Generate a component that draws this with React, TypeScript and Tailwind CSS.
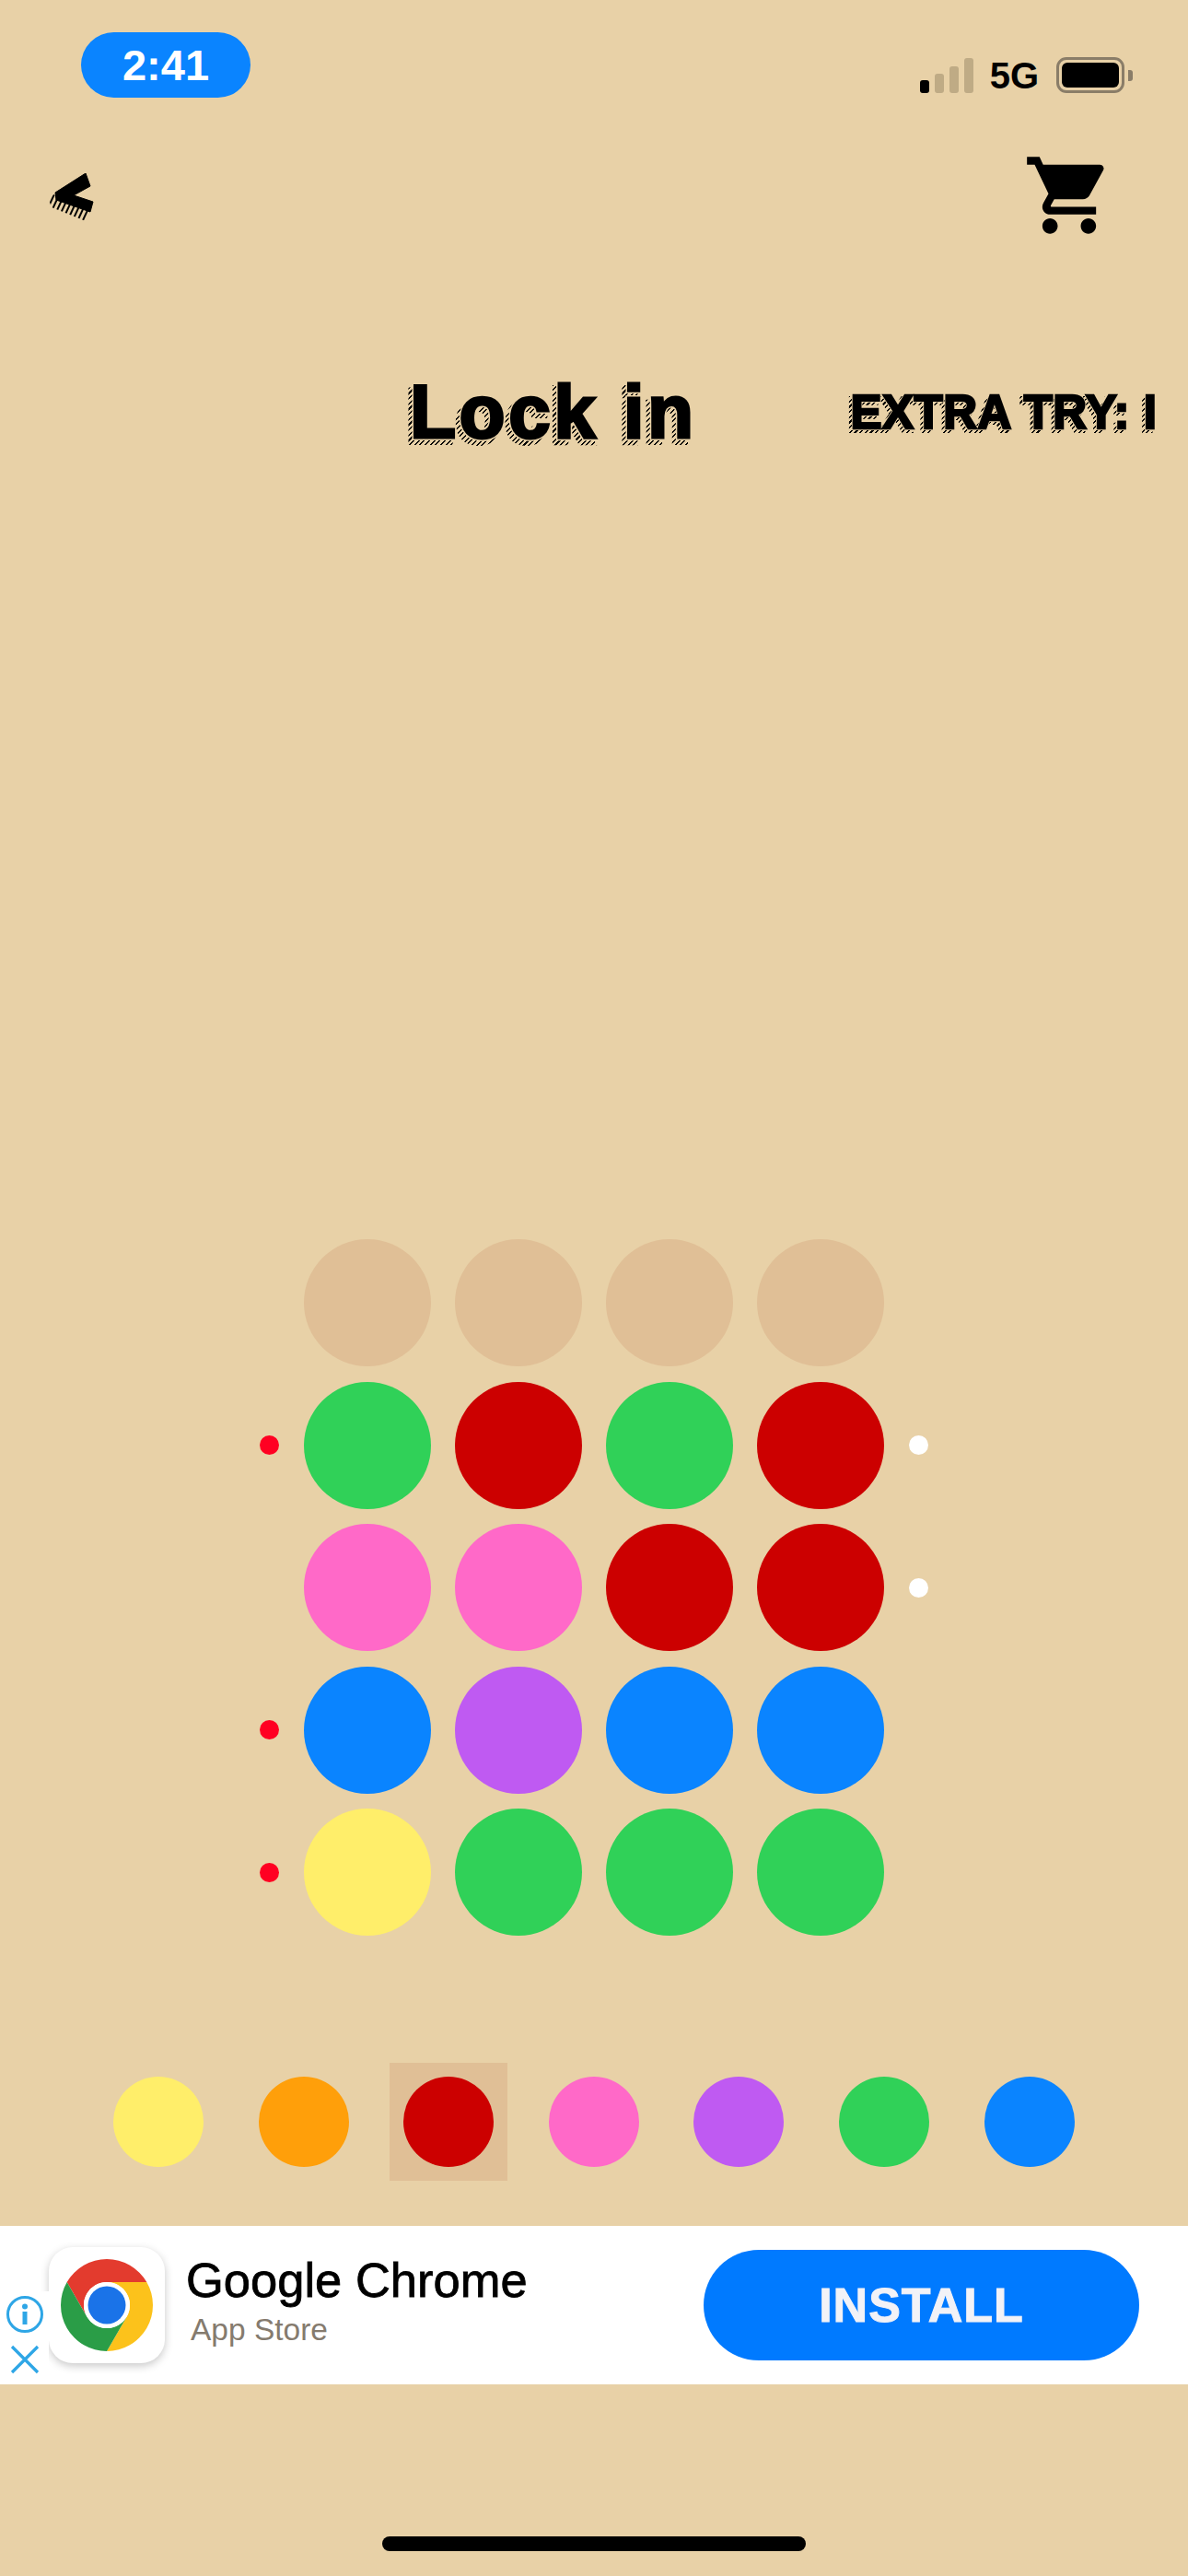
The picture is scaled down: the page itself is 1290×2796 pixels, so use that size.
import React from 'react';
import { MdShoppingCart } from 'react-icons/md';

const BG = 'bg-[#e8d1a7]';

// board rows: four pegs plus the left/right score dots
const rows = [
  { pegs: ['bg-[#e0bf96]', 'bg-[#e0bf96]', 'bg-[#e0bf96]', 'bg-[#e0bf96]'], red: false, white: false },
  { pegs: ['bg-[#30d158]', 'bg-[#cc0000]', 'bg-[#30d158]', 'bg-[#cc0000]'], red: true, white: true },
  { pegs: ['bg-[#ff69c8]', 'bg-[#ff69c8]', 'bg-[#cc0000]', 'bg-[#cc0000]'], red: false, white: true },
  { pegs: ['bg-[#0a84ff]', 'bg-[#bf5af2]', 'bg-[#0a84ff]', 'bg-[#0a84ff]'], red: true, white: false },
  { pegs: ['bg-[#ffee6a]', 'bg-[#30d158]', 'bg-[#30d158]', 'bg-[#30d158]'], red: true, white: false },
];

const palette = [
  'bg-[#ffee6a]',
  'bg-[#ff9f0a]',
  'bg-[#cc0000]',
  'bg-[#ff69c8]',
  'bg-[#bf5af2]',
  'bg-[#30d158]',
  'bg-[#0a84ff]',
];

// Heavy title text; the hatched drop shadow and its cream halo are pseudo elements behind the text
function ShadowText({ text, className }: { text: string; className: string }) {
  return (
    <span
      data-text={text}
      className={`relative isolate inline-block whitespace-nowrap font-bold text-black [font-family:'Liberation_Sans',Arial,sans-serif]
        before:absolute before:-z-10 before:content-[attr(data-text)] before:text-transparent before:bg-clip-text
        before:bg-[repeating-linear-gradient(135deg,#000_0px,#000_1.5px,transparent_1.5px,transparent_4px)]
        after:absolute after:left-0 after:top-0 after:-z-10 after:content-[attr(data-text)] after:text-[#e8d1a7]
        ${className}`}
    >
      {text}
    </span>
  );
}

function StatusBar() {
  return (
    <div className="h-[106px] flex justify-between items-start pl-[88px] pr-[60px] pt-[35px] [font-family:'Liberation_Sans',Arial,sans-serif]">
      <div className="w-[184px] h-[71px] rounded-full bg-[#0a84ff] text-white font-bold text-[47px] leading-[71px] text-center">
        2:41
      </div>
      <div className="flex items-end h-[66px] pb-0">
        <div className="flex items-end gap-[6px] mr-[18px]">
          <div className="w-[10px] h-[14px] rounded-[3px] bg-black" />
          <div className="w-[10px] h-[21px] rounded-[3px] bg-[#bfab85]" />
          <div className="w-[10px] h-[29px] rounded-[3px] bg-[#bfab85]" />
          <div className="w-[10px] h-[38px] rounded-[3px] bg-[#bfab85]" />
        </div>
        <div className="font-bold text-[40px] leading-[40px] text-black mr-[19px] mb-[-1px]">5G</div>
        <div className="flex items-center">
          <div className="w-[74px] h-[39px] rounded-[11px] border-[3px] border-[#8a7d68] p-[3px]">
            <div className="w-full h-full rounded-[6px] bg-black" />
          </div>
          <div className="w-[5px] h-[12px] ml-[4px] rounded-r-[3px] bg-[#8a7d68]" />
        </div>
      </div>
    </div>
  );
}

function BackChevron() {
  return (
    <svg width="52" height="54" viewBox="0 0 52 54" fill="none">
      <defs>
        <pattern id="hatch" width="5" height="5" patternUnits="userSpaceOnUse" patternTransform="rotate(25)">
          <rect width="2" height="5" fill="#000" />
        </pattern>
      </defs>
      <path d="M1 29 L6 23 L46 42 L41 52 L4 37 Z" fill="url(#hatch)" />
      <path
        d="M8 21 L41 0 L46 14 L28 24 L49 31 L46 42 L9 29 Z"
        fill="#000"
        stroke="#000"
        strokeWidth="1"
        strokeLinejoin="round"
      />
    </svg>
  );
}

function TopBar() {
  return (
    <div className="flex justify-between items-start pl-[52px] pr-[79px] mt-[56px]">
      <div className="mt-[26px]">
        <BackChevron />
      </div>
      <MdShoppingCart className="w-[100px] h-[100px] text-black" />
    </div>
  );
}

function Board() {
  return (
    <div className="flex flex-col gap-[16.5px] items-start ml-[282px]">
      {rows.map((row, i) => (
        <div key={i} className="flex items-center">
          <div className={`w-[21px] h-[21px] rounded-full ${row.red ? 'bg-[#ff0022]' : ''}`} />
          <div className="flex gap-[26px] ml-[27px]">
            {row.pegs.map((color, j) => (
              <div key={j} className={`w-[138px] h-[138px] rounded-full ${color}`} />
            ))}
          </div>
          <div className={`w-[21px] h-[21px] rounded-full ml-[27px] ${row.white ? 'bg-white' : ''}`} />
        </div>
      ))}
    </div>
  );
}

function Palette() {
  return (
    <div className="flex gap-[29.6px] pl-[108px]">
      {palette.map((color, i) => (
        <div
          key={i}
          className={`w-[128px] h-[128px] flex items-center justify-center ${i === 2 ? 'bg-[#e0bf96]' : ''}`}
        >
          <div className={`w-[98px] h-[98px] rounded-full ${color}`} />
        </div>
      ))}
    </div>
  );
}

function ChromeLogo() {
  return (
    <svg width="100" height="100" viewBox="0 0 100 100">
      <path d="M6.7 25 A50 50 0 0 1 93.3 25 L50 25 A25 25 0 0 0 28.3 62.5 Z" fill="#e33b2e" />
      <path d="M93.3 25 A50 50 0 0 1 50 100 L71.7 62.5 A25 25 0 0 0 50 25 Z" fill="#fcc21b" />
      <path d="M6.7 25 A50 50 0 0 0 50 100 L71.7 62.5 A25 25 0 0 1 28.3 62.5 Z" fill="#2a9d47" />
      <circle cx="50" cy="50" r="25" fill="#fff" />
      <circle cx="50" cy="50" r="20.5" fill="#1a73e8" />
    </svg>
  );
}

function AdBanner() {
  return (
    <div className="relative h-[172px] bg-white flex items-start [font-family:'Liberation_Sans',Arial,sans-serif]">
      <div className="ml-[53px] mt-[23px] w-[126px] h-[126px] rounded-[26px] bg-white shadow-[0_3px_10px_rgba(0,0,0,0.22)] flex items-center justify-center">
        <ChromeLogo />
      </div>
      <div className="ml-[23px] mt-[29px]">
        <div className="text-[52.5px] leading-[60px] text-black [-webkit-text-stroke:0.8px_#000]">Google Chrome</div>
        <div className="text-[33.5px] leading-[38px] text-[#857b6e] ml-[5px] mt-[5px]">App Store</div>
      </div>
      <div className="ml-auto mr-[53px] mt-[26px] w-[473px] h-[120px] rounded-full bg-[#007aff] text-[#f2f2f7] font-bold text-[52px] leading-[120px] text-center tracking-[1px] [-webkit-text-stroke:1px_#f2f2f7]">
        INSTALL
      </div>
      {/* info + close buttons sit over the app icon */}
      <div className="absolute left-0 top-[71px] w-[53px] h-[101px] bg-white flex flex-col items-center pt-[4px]">
        <svg width="42" height="42" viewBox="0 0 42 42" fill="none">
          <circle cx="21" cy="21" r="18.5" stroke="#2ea6e6" strokeWidth="3" />
          <circle cx="21" cy="12.5" r="3" fill="#2ea6e6" />
          <rect x="18.5" y="18" width="5" height="14" fill="#2ea6e6" />
        </svg>
        <svg width="32" height="32" viewBox="0 0 32 32" fill="none" className="mt-[12px]">
          <path d="M2 2 L30 30 M30 2 L2 30" stroke="#2ea6e6" strokeWidth="3.2" />
        </svg>
      </div>
    </div>
  );
}

export default function App() {
  return (
    <div className={`w-[1290px] h-[2796px] overflow-hidden flex flex-col ${BG}`}>
      <StatusBar />
      <TopBar />

      {/* Title row */}
      <div className="h-[80px] mt-[145px] flex items-start pl-[445px] gap-[167px]">
        <ShadowText
          text="Lock in"
          className="text-[82px] leading-[80px] tracking-[3.5px] [-webkit-text-stroke:3px_#000] before:left-[-4px] before:top-[5px] before:[-webkit-text-stroke:6px_transparent] after:[-webkit-text-stroke:6px_#e8d1a7]"
        />
        <div className="mt-[15px]">
          <ShadowText
            text="EXTRA TRY: I"
            className="text-[51px] leading-[51px] tracking-[0.5px] [-webkit-text-stroke:2.5px_#000] before:left-[-3px] before:top-[3px] before:[-webkit-text-stroke:4px_transparent] after:[-webkit-text-stroke:4px_#e8d1a7]"
          />
        </div>
      </div>

      <div className="mt-[858px]">
        <Board />
      </div>

      <div className="mt-[138px]">
        <Palette />
      </div>

      <div className="mt-[49px]">
        <AdBanner />
      </div>

      <div className="mt-[165px] mx-auto w-[460px] h-[16px] rounded-full bg-black" />
    </div>
  );
}
